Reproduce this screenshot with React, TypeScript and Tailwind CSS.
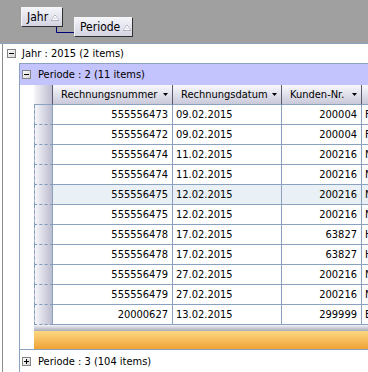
const rows = [
  ['555556473', '09.02.2015', '200004', 'F'],
  ['555556472', '09.02.2015', '200004', 'F'],
  ['555556474', '11.02.2015', '200216', 'N'],
  ['555556474', '11.02.2015', '200216', 'N'],
  ['555556475', '12.02.2015', '200216', 'N'],
  ['555556475', '12.02.2015', '200216', 'N'],
  ['555556478', '17.02.2015', '63827', 'H'],
  ['555556478', '17.02.2015', '63827', 'H'],
  ['555556479', '27.02.2015', '200216', 'N'],
  ['555556479', '27.02.2015', '200216', 'N'],
  ['20000627', '13.02.2015', '299999', 'E'],
];

function Expander({ open }: { open: boolean }) {
  return (
    <svg width="9" height="9" viewBox="0 0 9 9" className="shrink-0">
      <defs>
        <linearGradient id="exp" x1="0" y1="0" x2="1" y2="1">
          <stop offset="0" stopColor="#ffffff" />
          <stop offset="1" stopColor="#d4d4d4" />
        </linearGradient>
      </defs>
      <rect x="0.5" y="0.5" width="8" height="8" fill="url(#exp)" stroke="#848484" />
      <path d="M2 4.5h5" stroke="#000" />
      {!open && <path d="M4.5 2v5" stroke="#000" />}
    </svg>
  );
}

function GroupButton({ label, className }: { label: string; className: string }) {
  return (
    <div className={`flex h-[20px] items-center border border-t-[#f6f6f6] border-l-[#f6f6f6] border-r-[#303030] border-b-[#303030] bg-gradient-to-b from-[#f4f4fa] to-[#d4d4e2] pl-[5px] text-[12px] text-black ${className}`}>
      <span>{label}</span>
      <svg width="8" height="7" viewBox="0 0 8 7" className="ml-[3px] shrink-0">
        <path d="M4 1 L7.5 6.5 H0.5 Z" fill="none" stroke="#9a9aaa" strokeWidth="1" />
        <path d="M4 1.8 L6.6 5.8 H1.4 Z" fill="none" stroke="#ffffff" strokeWidth="1" />
      </svg>
    </div>
  );
}

function HeaderCell({ label }: { label: string }) {
  return (
    <div className="flex items-center justify-between border-r border-b border-r-[#5a5a6e] border-b-[#8aa2bf] bg-gradient-to-b from-[#f8f8fc] to-[#c9c9da] pl-[8px] pr-[4px] text-black">
      <span className="whitespace-nowrap">{label}</span>
      <svg width="5" height="3" viewBox="0 0 5 3" className="shrink-0"><path d="M0 0h5L2.5 3z" fill="#000" /></svg>
    </div>
  );
}

export default function App() {
  return (
    <div className="flex h-[372px] w-[368px] flex-col overflow-hidden bg-white text-[11px] leading-none text-black [font-family:'DejaVu_Sans_Condensed','DejaVu_Sans',sans-serif] [font-stretch:condensed]">
      <div className="relative flex h-[44px] shrink-0 items-start border-b border-[#8aa2bf] bg-[#a0a0a0] pl-[21px] pt-[7px]">
        <GroupButton label="Jahr" className="w-[42px]" />
        <GroupButton label="Periode" className="ml-[11px] mt-[10px] w-[59px]" />
        <svg width="20" height="8" viewBox="0 0 20 8" className="absolute left-[56px] top-[27px]">
          <path d="M0.5 0v5.5H18" fill="none" stroke="#00007c" />
        </svg>
      </div>

      <div className="ml-[2px] flex flex-1 flex-col border-l border-[#8c8c8c]">
        <div className="flex h-[19px] shrink-0 items-center gap-[6px] pl-[4px]">
          <Expander open />
          <span>Jahr : 2015 (2 items)</span>
        </div>

        <div className="ml-[16px] flex flex-1 flex-col border-l border-[#8aa2bf]">
          <div className="flex flex-col border-t border-b border-[#8aa2bf]">
            <div className="flex h-[21px] items-center gap-[7px] bg-[#c3c3fd] pl-[2px]">
              <Expander open />
              <span>Periode : 2 (11 items)</span>
            </div>

            <div className="ml-[14px] flex flex-col">
              <div className="grid grid-cols-[19px_120px_109px_80px_1fr] auto-rows-[20px]">
                <div className="border-r border-b border-r-[#5a5a6e] border-b-[#8aa2bf] bg-gradient-to-r from-[#f6f6fa] to-[#bcbcd0]" />
                <HeaderCell label="Rechnungsnummer" />
                <HeaderCell label="Rechnungsdatum" />
                <HeaderCell label="Kunden-Nr." />
                <div className="border-b border-[#8aa2bf] bg-gradient-to-b from-[#f8f8fc] to-[#c9c9da]" />

                {rows.map((r, i) => {
                  const bg = i === 4 ? 'bg-[#e9f0f6]' : 'bg-white';
                  return [
                    <div key={`ind-${i}`} className="border-l border-b border-r border-dashed border-[#7f9bbd] [border-right-style:solid] border-r-[#8aa2bf] bg-gradient-to-r from-[#f6f6fa] to-[#bcbcd0]" />,
                    <div key={`nr-${i}`} className={`flex items-center justify-end border-r border-b border-[#8aa2bf] pr-[4px] ${bg}`}>{r[0]}</div>,
                    <div key={`dt-${i}`} className={`flex items-center border-r border-b border-[#8aa2bf] pl-[3px] ${bg}`}>{r[1]}</div>,
                    <div key={`kd-${i}`} className={`flex items-center justify-end border-r border-b border-[#8aa2bf] pr-[4px] ${bg}`}>{r[2]}</div>,
                    <div key={`nm-${i}`} className={`flex items-center border-b border-[#8aa2bf] pl-[3px] ${bg}`}>{r[3]}</div>,
                  ];
                })}
              </div>
              <div className="h-[6px] bg-gradient-to-b from-[#f2f2f6] to-[#a9a9b8]" />
              <div className="h-[18px] bg-gradient-to-b from-[#fcd880] to-[#f0a232]" />
            </div>
          </div>

          <div className="flex h-[22px] shrink-0 items-center gap-[7px] pl-[2px]">
            <Expander open={false} />
            <span>Periode : 3 (104 items)</span>
          </div>
        </div>
      </div>
    </div>
  );
}
